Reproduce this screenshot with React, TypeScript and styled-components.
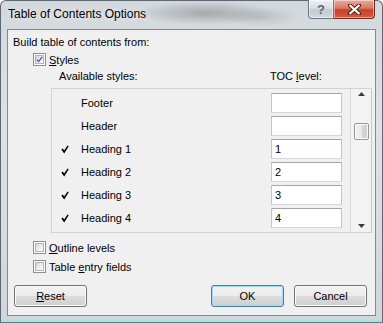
import styled, { createGlobalStyle } from "styled-components";

const GlobalStyle = createGlobalStyle`
  html, body {
    margin: 0;
    padding: 0;
    background: #ffffff;
  }
  body {
    font-family: "Liberation Sans", Arial, sans-serif;
    font-size: 11px;
    color: #000;
  }
  * {
    box-sizing: border-box;
  }
`;

const Window = styled.div`
  width: 383px;
  height: 323px;
  display: flex;
  flex-direction: column;
  padding: 0 6px 6px;
  border: 1px solid #5d6873;
  border-bottom-color: #2f8f9a;
  border-radius: 6px 6px 0 0;
  background:
    radial-gradient(ellipse 70px 12px at 205px 12px, rgba(110, 110, 110, 0.45), transparent),
    radial-gradient(ellipse 40px 10px at 260px 16px, rgba(150, 150, 150, 0.35), transparent),
    linear-gradient(180deg, #d3d8dd 0%, #dde2e6 40%, #cfd6dc 100%);
  box-shadow: inset 0 -2px 0 #a7e1e4;
`;

const TitleBar = styled.div`
  height: 28px;
  display: flex;
  align-items: flex-start;
`;

const Title = styled.span`
  margin-top: 6px;
  padding-left: 1px;
  font-size: 12px;
  color: #000;
  text-shadow: 0 0 6px rgba(255, 255, 255, 0.9);
`;

const CaptionButtons = styled.div`
  margin-left: auto;
  margin-right: 1px;
  margin-top: -1px;
  display: flex;
`;

const CaptionButton = styled.div<{ $close?: boolean }>`
  width: ${(p) => (p.$close ? "41px" : "26px")};
  height: 19px;
  display: flex;
  align-items: center;
  justify-content: center;
  border: 1px solid ${(p) => (p.$close ? "#6b2a1f" : "#6f7984")};
  border-top: none;
  border-left-width: ${(p) => (p.$close ? "0" : "1px")};
  border-radius: ${(p) => (p.$close ? "0 0 4px 0" : "0 0 0 4px")};
  background: ${(p) =>
    p.$close
      ? "linear-gradient(180deg, #e9a99b 0%, #d77a66 45%, #c5402a 55%, #d45a40 100%)"
      : "linear-gradient(180deg, #eef1f4 0%, #d9dfe5 45%, #c3cbd3 55%, #d3d9df 100%)"};
  box-shadow: inset 0 0 0 1px rgba(255, 255, 255, 0.45);
  color: ${(p) => (p.$close ? "#fff" : "#5b6570")};
  font-size: 13px;
  font-weight: bold;
`;

const Client = styled.div`
  flex: 1;
  display: flex;
  flex-direction: column;
  padding: 4px 8px 0 5px;
  border: 1px solid #7e8a96;
  background: #f0f0f0;
`;

const Line = styled.div<{ $indent?: number; $top?: number }>`
  height: 15px;
  display: flex;
  align-items: center;
  margin-left: ${(p) => p.$indent ?? 0}px;
  margin-top: ${(p) => p.$top ?? 0}px;
  white-space: nowrap;
`;

const Box = styled.span`
  width: 13px;
  height: 13px;
  margin-right: 3px;
  flex: none;
  display: flex;
  align-items: center;
  justify-content: center;
  border: 1px solid #8e8f8f;
  background: #fff;
  padding: 1px;
`;

const BoxInner = styled.span`
  width: 100%;
  height: 100%;
  display: flex;
  align-items: center;
  justify-content: center;
  border: 1px solid #b0b5bb;
  background: linear-gradient(135deg, #d4d7db 0%, #f2f3f4 70%, #ffffff 100%);
`;

const Labels = styled.div`
  height: 15px;
  margin-top: 1px;
  display: flex;
  align-items: center;
  padding-left: 46px;
`;

const StylesLabel = styled.span`
  width: 211px;
`;

const ListBox = styled.div`
  margin: 5px 0 0 38px;
  width: 321px;
  height: 145px;
  display: flex;
  border: 1px solid #d2d2d2;
  border-right-color: #c8c8c8;
`;

const Rows = styled.div`
  flex: 1;
  display: flex;
  flex-direction: column;
  gap: 3px;
  padding: 4px 8px 0 0;
`;

const Row = styled.div`
  height: 20px;
  display: grid;
  grid-template-columns: 29px 1fr 71px;
  align-items: center;
`;

const Tick = styled.span`
  padding-left: 9px;
  display: flex;
  align-items: center;
`;

const Level = styled.div`
  height: 20px;
  padding: 0 3px;
  display: flex;
  align-items: center;
  background: #fff;
  border: 1px solid #abadb3;
  border-top-color: #a3a5ab;
  border-left-color: #c2c5ca;
  border-right-color: #c2c5ca;
  border-bottom-color: #d4d8dd;
`;

const ScrollBar = styled.div`
  width: 21px;
  display: flex;
  flex-direction: column;
  align-items: center;
  padding: 3px 0 4px;
  border-left: 1px solid #dcdcdc;
  background: #f3f3f3;
`;

const Thumb = styled.div`
  margin-top: 27px;
  width: 15px;
  height: 17px;
  border: 1px solid #979797;
  border-radius: 2px;
  background: linear-gradient(90deg, #f3f3f3 0%, #e8e8e8 50%, #d6d6d6 51%, #cfcfcf 100%);
  box-shadow: inset 0 0 0 1px #fbfbfb;
`;

const Spacer = styled.div`
  flex: 1;
`;

const ButtonRow = styled.div`
  margin-top: 11px;
  display: flex;
  padding-left: 1px;
`;

const Button = styled.div<{ $default?: boolean }>`
  width: 73px;
  height: 22px;
  display: flex;
  align-items: center;
  justify-content: center;
  border: 1px solid ${(p) => (p.$default ? "#3c7fb1" : "#707070")};
  border-radius: 3px;
  background: linear-gradient(180deg, #f2f2f2 0%, #ebebeb 48%, #dddddd 52%, #cfcfcf 100%);
  box-shadow: inset 0 0 0 1px ${(p) => (p.$default ? "#9fdcf6" : "#fbfbfb")};
  &:last-child {
    margin-left: 10px;
  }
`;

const ButtonGap = styled.div`
  flex: 1;
`;

function Check() {
  return (
    <svg width="8" height="9" viewBox="0 0 8 9">
      <path d="M0.3 4.6 L1.9 3.6 L3.1 5.6 L6.6 0.4 L7.7 1.2 L3.2 8.4 Z" fill="#000" />
    </svg>
  );
}

function BoxCheck() {
  return (
    <svg width="9" height="9" viewBox="0 0 9 9">
      <path d="M1 4.5 L3.5 7.2 L8 1" fill="none" stroke="#4a5f97" strokeWidth="1.6" />
    </svg>
  );
}

function CheckBox({ checked }: { checked?: boolean }) {
  return (
    <Box>
      <BoxInner>{checked && <BoxCheck />}</BoxInner>
    </Box>
  );
}

function Arrow({ up }: { up?: boolean }) {
  return (
    <svg width="7" height="4" viewBox="0 0 7 4">
      <path d={up ? "M0 4 L3.5 0 L7 4 Z" : "M0 0 L3.5 4 L7 0 Z"} fill="#3a3a3a" />
    </svg>
  );
}

const styles = [
  { name: "Footer", level: "", checked: false },
  { name: "Header", level: "", checked: false },
  { name: "Heading 1", level: "1", checked: true },
  { name: "Heading 2", level: "2", checked: true },
  { name: "Heading 3", level: "3", checked: true },
  { name: "Heading 4", level: "4", checked: true },
];

export default function App() {
  return (
    <>
      <GlobalStyle />
      <Window>
        <TitleBar>
          <Title>Table of Contents Options</Title>
          <CaptionButtons>
            <CaptionButton>?</CaptionButton>
            <CaptionButton $close>
              <svg width="13" height="11" viewBox="0 0 13 11">
                <path
                  d="M1.5 1 L11.5 10 M11.5 1 L1.5 10"
                  stroke="#5a1d14"
                  strokeWidth="4"
                  strokeLinecap="round"
                />
                <path d="M1.5 1 L11.5 10 M11.5 1 L1.5 10" stroke="#fff" strokeWidth="2.2" />
              </svg>
            </CaptionButton>
          </CaptionButtons>
        </TitleBar>
        <Client>
          <Line>Build table of contents from:</Line>
          <Line $indent={20} $top={3}>
            <CheckBox checked />
            <span>
              <u>S</u>tyles
            </span>
          </Line>
          <Labels>
            <StylesLabel>Available styles:</StylesLabel>
            <span>
              TOC <u>l</u>evel:
            </span>
          </Labels>
          <ListBox>
            <Rows>
              {styles.map((s) => (
                <Row key={s.name}>
                  <Tick>{s.checked && <Check />}</Tick>
                  <span>{s.name}</span>
                  <Level>{s.level}</Level>
                </Row>
              ))}
            </Rows>
            <ScrollBar>
              <Arrow up />
              <Thumb />
              <Spacer />
              <Arrow />
            </ScrollBar>
          </ListBox>
          <Line $indent={20} $top={7}>
            <CheckBox />
            <span>
              <u>O</u>utline levels
            </span>
          </Line>
          <Line $indent={20} $top={4}>
            <CheckBox />
            <span>
              Table <u>e</u>ntry fields
            </span>
          </Line>
          <ButtonRow>
            <Button>
              <span>
                <u>R</u>eset
              </span>
            </Button>
            <ButtonGap />
            <Button $default>OK</Button>
            <Button>Cancel</Button>
          </ButtonRow>
        </Client>
      </Window>
    </>
  );
}
